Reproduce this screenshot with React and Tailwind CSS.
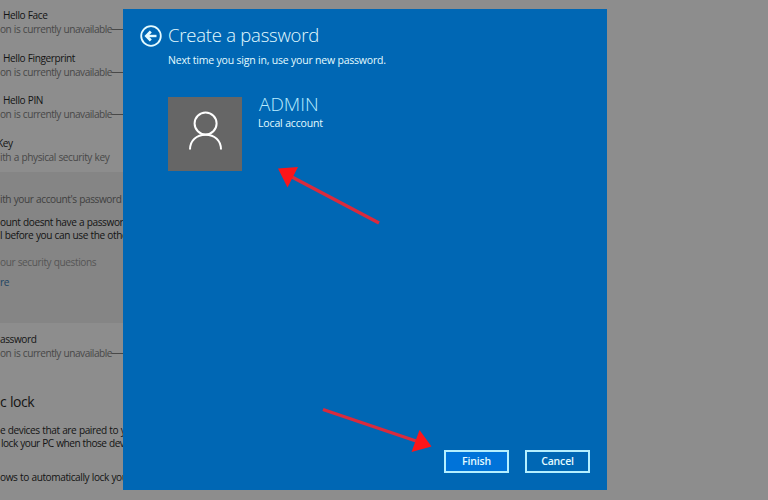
import clsx from "clsx";

// One line of the settings page, cut off by the left edge of the window
function Line({ children, className }) {
  return (
    <p className={clsx("h-[14px] whitespace-nowrap leading-[14px]", className)}>
      {children}
    </p>
  );
}

function Unavailable() {
  return (
    <Line className="flex text-[#484848] tracking-[-0.47px]">
      <span className="w-[111px]">on is currently unavailable</span>
      <span className="text-[13px] leading-[13px]">—</span>
    </Line>
  );
}

function SignInOption({ title, className }) {
  return (
    <div className={className}>
      <Line className="ml-[3px] text-[#141414]">{title}</Line>
      <Unavailable />
    </div>
  );
}

function SettingsPage() {
  return (
    <aside className="w-[123px] h-[500px] shrink-0 overflow-hidden text-[10.1px] tracking-[-0.42px] [word-spacing:0.4px]">
      <SignInOption title="Hello Face" className="mt-[8px]" />
      <SignInOption title="Hello Fingerprint" className="mt-[15px]" />
      <SignInOption title="Hello PIN" className="mt-[14px]" />
      <Line className="mt-[15px] ml-[-3px] text-[#141414]">Key</Line>
      <Line className="text-[#484848]">ith a physical security key</Line>

      <section className="mt-[8px] h-[151px] bg-[#858585] pt-[20px]">
        <Line className="text-[#404040]">ith your account's password</Line>
        <Line className="mt-[9px] text-[#141414]">
          ount doesnt have a password
        </Line>
        <Line className="mt-[-1px] text-[#141414]">
          l before you can use the other
        </Line>
        <Line className="mt-[13px] text-[#555]">our security questions</Line>
        <Line className="mt-[6px] text-[#1d4463]">re</Line>
      </section>

      <Line className="mt-[9px] text-[#141414]">assword</Line>
      <Unavailable />

      <h2 className="mt-[32px] h-[20px] whitespace-nowrap text-[14px] leading-[20px] text-[#141414]">
        c lock
      </h2>
      <Line className="mt-[11px] text-[#141414]">
        e devices that are paired to your
      </Line>
      <Line className="mt-[-1px] ml-[1px] text-[#141414] tracking-[-0.5px]">
        lock your PC when those devices
      </Line>
      <Line className="mt-[20px] text-[#141414]">
        ows to automatically lock your
      </Line>
    </aside>
  );
}

function BackIcon() {
  return (
    <svg width="22" height="22" viewBox="0 0 22 22" fill="none" stroke="#e4fbff">
      <circle cx="11" cy="11" r="9.8" strokeWidth="1.8" />
      <path d="M16.5 11H7" strokeWidth="2.4" />
      <path d="M10.8 6.6 6.4 11l4.4 4.4" strokeWidth="2.8" />
    </svg>
  );
}

function UserIcon() {
  return (
    <svg width="34" height="40" viewBox="0 0 34 40" fill="none" stroke="#fff">
      <circle cx="17.6" cy="12.5" r="11" strokeWidth="2" />
      <path d="M2 38.5C2 29.5 8.6 23.7 17.6 23.7S33 29.5 33 38.5" strokeWidth="2" />
    </svg>
  );
}

function Arrows() {
  return (
    <svg
      className="pointer-events-none absolute inset-0"
      width="768"
      height="500"
      viewBox="0 0 768 500"
    >
      <g stroke="#d92b3d" strokeWidth="3.4">
        <path d="M379 223 292 177" />
        <path d="M323 409.5 416 441" />
      </g>
      <g fill="#fc1519">
        <path d="M278 168.5 298 167 287.5 187.5Z" />
        <path d="M431.5 446.5 419.5 430 411.5 452Z" />
      </g>
    </svg>
  );
}

function PasswordDialog() {
  return (
    <main className="mt-[9px] flex h-[481px] w-[484px] flex-col bg-[#0067b4] text-[#e4fbff]">
      <header className="mt-[15px] ml-[17px] flex h-[23px] items-center">
        <BackIcon />
        <h1 className="mt-[-2px] ml-[6px] whitespace-nowrap text-[18.5px] font-light leading-[23px] tracking-[-0.23px]">
          Create a password
        </h1>
      </header>
      <p className="mt-[6px] ml-[45px] h-[14px] whitespace-nowrap text-[10.5px] leading-[14px] tracking-[-0.2px]">
        Next time you sign in, use your new password.
      </p>

      <div className="mt-[30px] ml-[45px] flex h-[74px]">
        <div className="flex w-[74px] justify-center bg-[#666] pt-[14px]">
          <UserIcon />
        </div>
        <div className="ml-[16px]">
          <p className="ml-px h-[19px] text-[19px] font-light leading-[14px] text-[#b9ecff]">
            ADMIN
          </p>
          <p className="text-[10.5px] leading-[14px] tracking-[-0.15px]">
            Local account
          </p>
        </div>
      </div>

      <div className="mt-auto mr-[17px] mb-[17px] flex justify-end gap-[16px] text-[10.5px] font-semibold tracking-[-0.15px]">
        <button className="h-[23px] w-[65px] border-2 border-[#b4efff] bg-[#0073d9]">
          Finish
        </button>
        <button className="h-[23px] w-[65px] border-2 border-[#b4efff]">
          Cancel
        </button>
      </div>
    </main>
  );
}

export default function App() {
  return (
    <div className="relative flex h-[500px] w-[768px] overflow-hidden bg-[#8d8d8d] font-['Open_Sans','Noto_Sans',sans-serif]">
      <SettingsPage />
      <PasswordDialog />
      <Arrows />
    </div>
  );
}
